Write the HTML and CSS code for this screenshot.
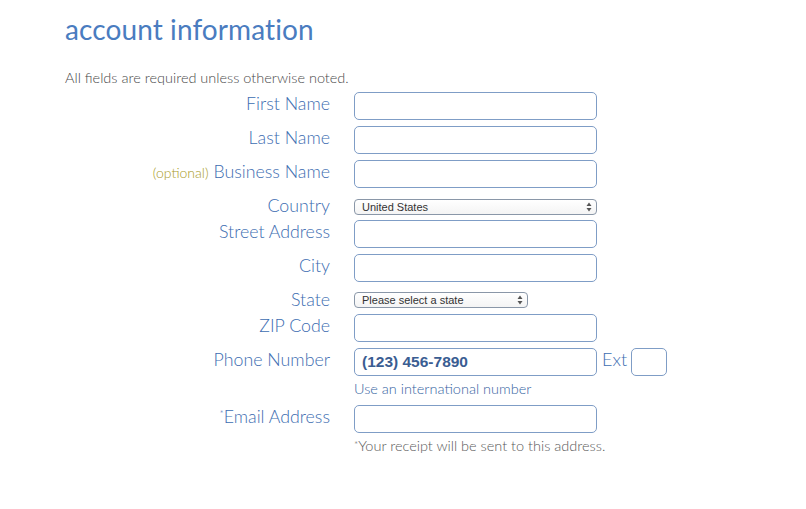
FILE: index.html
```html
<!DOCTYPE html>
<html lang="en">
<head>
<meta charset="utf-8">
<title>account information</title>
<link rel="stylesheet" href="styles.css">
</head>
<body>
<div class="page">
  <h1 class="title">account information</h1>
  <p class="intro">All fields are required unless otherwise noted.</p>
  <form class="form">
    <div class="row">
      <label class="label">First Name</label>
      <input class="field" type="text">
    </div>
    <div class="row">
      <label class="label">Last Name</label>
      <input class="field" type="text">
    </div>
    <div class="row">
      <label class="label"><span class="optional">(optional)</span> Business Name</label>
      <input class="field" type="text">
    </div>
    <div class="row row-select">
      <label class="label">Country</label>
      <span class="select select-wide">
        <span class="select-text">United States</span>
        <svg class="arrows" width="6" height="10" viewBox="0 0 6 10"><path d="M3 0.5 L5.5 4 H0.5 Z M3 9.5 L5.5 6 H0.5 Z" fill="#555"/></svg>
      </span>
    </div>
    <div class="row">
      <label class="label">Street Address</label>
      <input class="field" type="text">
    </div>
    <div class="row">
      <label class="label">City</label>
      <input class="field" type="text">
    </div>
    <div class="row row-select">
      <label class="label">State</label>
      <span class="select select-narrow">
        <span class="select-text">Please select a state</span>
        <svg class="arrows" width="6" height="10" viewBox="0 0 6 10"><path d="M3 0.5 L5.5 4 H0.5 Z M3 9.5 L5.5 6 H0.5 Z" fill="#555"/></svg>
      </span>
    </div>
    <div class="row">
      <label class="label">ZIP Code</label>
      <input class="field" type="text">
    </div>
    <div class="row row-tight">
      <label class="label">Phone Number</label>
      <input class="field field-phone" type="text" value="(123) 456-7890">
      <span class="ext-label">Ext</span>
      <input class="field field-ext" type="text">
    </div>
    <p class="hint">Use an international number</p>
    <div class="row row-tight">
      <label class="label"><span class="star">*</span>Email Address</label>
      <input class="field" type="text">
    </div>
    <p class="note"><span class="star">*</span>Your receipt will be sent to this address.</p>
  </form>
</div>
</body>
</html>
```
FILE: styles.css
```css
html, body {
  margin: 0;
  padding: 0;
  background: #ffffff;
}

.page {
  padding: 11px 0 0 65px;
  font-family: "Lato", "Open Sans", sans-serif;
  font-weight: 300;
}

.title {
  margin: 0;
  font-size: 28px;
  line-height: 36px;
  font-weight: 400;
  color: #4a7cc0;
  letter-spacing: 0.1px;
}

.intro {
  margin: 22px 0 0 0;
  font-size: 14.5px;
  line-height: 17px;
  color: #4a4a4a;
}

.form {
  margin-top: 6px;
}

.row {
  display: flex;
  align-items: flex-start;
  margin-bottom: 6px;
}

.row-tight {
  margin-bottom: 0;
}

.label {
  width: 265px;
  flex: none;
  margin-right: 24px;
  text-align: right;
  font-size: 17.8px;
  line-height: 22px;
  color: #3d6db1;
}

.optional {
  font-size: 14px;
  color: #a89a1e;
}

.star {
  display: inline-block;
  font-size: 10px;
  line-height: 10px;
  vertical-align: top;
  margin-top: 3px;
}

.field {
  box-sizing: border-box;
  width: 243px;
  height: 28px;
  margin: 0;
  padding: 0 7px;
  border: 1px solid #7f9dc6;
  border-radius: 5px;
  background: #ffffff;
  font-family: "Liberation Sans", Arial, sans-serif;
  font-size: 15.5px;
  font-weight: 700;
  color: #3a5d92;
  outline: none;
}

.field-ext {
  width: 36px;
}

.ext-label {
  margin: 0 4px 0 5px;
  font-size: 18px;
  line-height: 22px;
  color: #3d6db1;
}

.row-select {
  height: 20px;
}

.select {
  box-sizing: border-box;
  display: flex;
  align-items: center;
  justify-content: space-between;
  height: 16px;
  margin-top: 5px;
  padding: 0 4px 0 7px;
  border: 1px solid #8a97a8;
  border-radius: 4px;
  background: linear-gradient(#ffffff, #f4f4f4);
}

.select-wide {
  width: 243px;
}

.select-narrow {
  width: 174px;
  margin-top: 4px;
}

.select-text {
  font-family: "Liberation Sans", Arial, sans-serif;
  font-size: 11px;
  line-height: 14px;
  font-weight: 400;
  color: #333333;
}

.arrows {
  display: block;
}

.hint {
  margin: 0 0 5px 289px;
  padding-top: 2px;
  font-size: 14.5px;
  line-height: 22px;
  color: #36649f;
}

.note {
  margin: 0 0 0 289px;
  padding-top: 3px;
  font-size: 14.5px;
  line-height: 20px;
  color: #5a5a5a;
}
```
